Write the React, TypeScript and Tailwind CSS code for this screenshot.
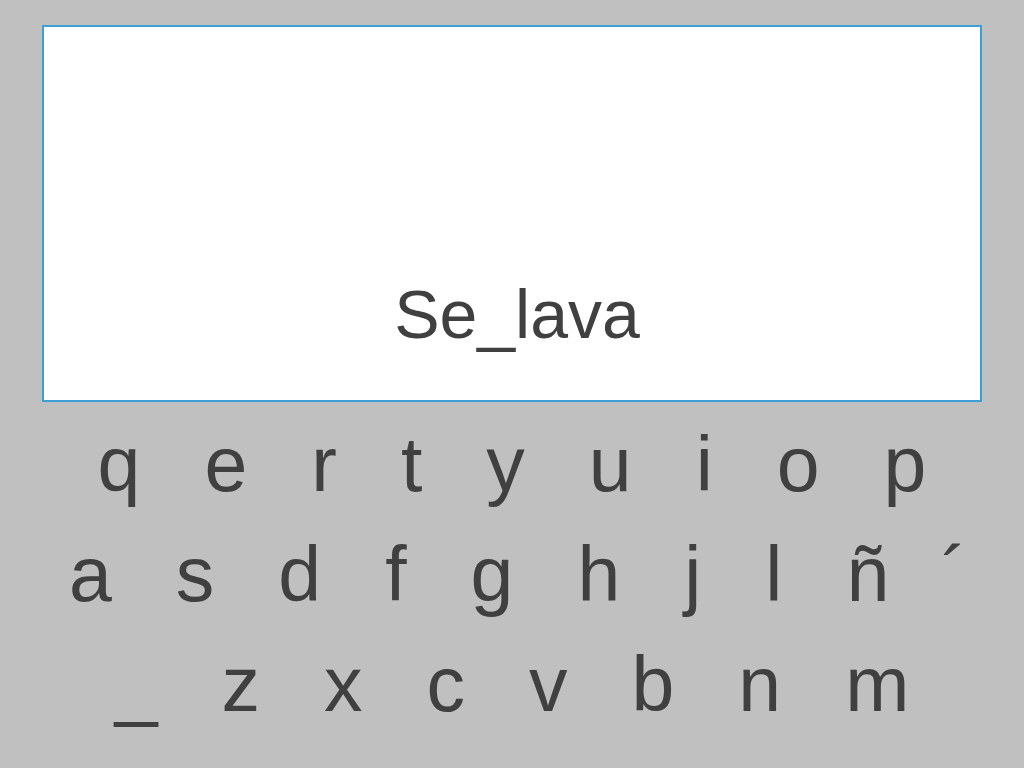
import React from 'react';

const rows: string[][] = [
  ['q', 'e', 'r', 't', 'y', 'u', 'i', 'o', 'p'],
  ['a', 's', 'd', 'f', 'g', 'h', 'j', 'l', 'ñ', '´'],
  ['_', 'z', 'x', 'c', 'v', 'b', 'n', 'm'],
];

const App: React.FC = () => {
  const word = 'Se_lava';

  return (
    <div
      className="min-h-screen w-full bg-[#c0c0c0] text-[#404040] pt-[25px]"
      style={{ fontFamily: '"Liberation Sans", Arial, Helvetica, sans-serif' }}
    >
      {/* Word display */}
      <div className="mx-[42px] h-[377px] border-2 border-[#3d9fd3] bg-white flex flex-col justify-end items-center pb-[52px]">
        <p className="text-[68px] leading-none pl-[10px]">{word}</p>
      </div>

      {/* Keyboard */}
      <div className="flex flex-col pt-[7px]">
        {rows.map((row, i) => (
          <div
            key={i}
            className={`flex justify-center gap-[64px] text-[77px] leading-[110px] ${i === 1 ? 'pl-[12px]' : ''}`}
          >
            {row.map((key) => (
              <span key={key} className={`cursor-pointer ${key === '´' ? '-ml-[12px]' : ''}`}>
                {key}
              </span>
            ))}
          </div>
        ))}
      </div>
    </div>
  );
};

export default App;
